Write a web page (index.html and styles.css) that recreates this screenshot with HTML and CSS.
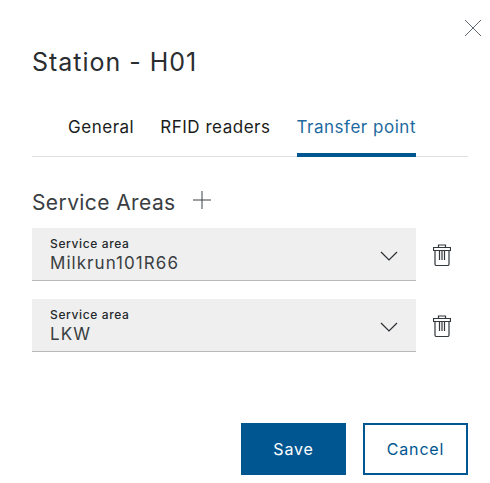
FILE: index.html
```html
<!DOCTYPE html>
<html lang="en">
<head>
<meta charset="utf-8">
<title>Station - H01</title>
<link rel="stylesheet" href="styles.css">
</head>
<body>
<div class="dialog">
  <div class="close-row">
    <svg class="close" width="18" height="18" viewBox="0 0 18 18"><path d="M1 1 L17 17 M17 1 L1 17" fill="none" stroke="#5f6670" stroke-width="1"/></svg>
  </div>
  <h1 class="title">Station - H01</h1>
  <div class="tabs">
    <span class="tab">General</span>
    <span class="tab">RFID readers</span>
    <span class="tab active">Transfer point</span>
  </div>
  <div class="section">
    <span class="section-title">Service Areas</span>
    <svg class="plus" width="20" height="20" viewBox="0 0 20 20"><path d="M10 1 V19 M1 10 H19" fill="none" stroke="#3c4248" stroke-width="1"/></svg>
  </div>
  <div class="rows">
    <div class="row">
      <div class="select">
        <div class="texts"><span class="label">Service area</span><span class="value">Milkrun101R66</span></div>
        <svg class="chev" width="18" height="10" viewBox="0 0 18 10"><path d="M1 1 L9 9 L17 1" fill="none" stroke="#2a2e32" stroke-width="1.2"/></svg>
      </div>
      <svg class="trash" width="18" height="22" viewBox="0 0 18 22"><path d="M0.5 3.5 H17.5 V6.5 H0.5 Z M5.5 3.5 V1 H12.5 V3.5 M2 6.5 V20 Q2 21.5 3.5 21.5 H14.5 Q16 21.5 16 20 V6.5 M6.5 6.5 V16 M9 6.5 V16 M11.5 6.5 V16" fill="none" stroke="#33383d" stroke-width="1.2"/></svg>
    </div>
    <div class="row">
      <div class="select">
        <div class="texts"><span class="label">Service area</span><span class="value">LKW</span></div>
        <svg class="chev" width="18" height="10" viewBox="0 0 18 10"><path d="M1 1 L9 9 L17 1" fill="none" stroke="#2a2e32" stroke-width="1.2"/></svg>
      </div>
      <svg class="trash" width="18" height="22" viewBox="0 0 18 22"><path d="M0.5 3.5 H17.5 V6.5 H0.5 Z M5.5 3.5 V1 H12.5 V3.5 M2 6.5 V20 Q2 21.5 3.5 21.5 H14.5 Q16 21.5 16 20 V6.5 M6.5 6.5 V16 M9 6.5 V16 M11.5 6.5 V16" fill="none" stroke="#33383d" stroke-width="1.2"/></svg>
    </div>
  </div>
  <div class="actions">
    <button class="btn primary">Save</button>
    <button class="btn secondary">Cancel</button>
  </div>
</div>
</body>
</html>
```
FILE: styles.css
```css
* { box-sizing: border-box; }
html, body { margin: 0; padding: 0; background: #fff; }
body { font-family: "Inter", "Noto Sans", sans-serif; color: #1f2327; }
.dialog { width: 490px; height: 483px; padding: 19px 22px 0 32px; display: flex; flex-direction: column; overflow: hidden; }
.close-row { display: flex; justify-content: flex-end; margin-right: -14px; height: 18px; }
.close { display: block; }
.title { margin: 8px 0 0; font-size: 25px; line-height: 34px; font-weight: 400; letter-spacing: 0.97px; color: #2a2d30; }
.tabs { display: flex; gap: 26px; padding-left: 36px; margin-top: 35px; height: 43px; border-bottom: 1px solid #dfdfe0; }
.tab { font-size: 17px; line-height: 24px; padding-top: 1px; letter-spacing: 0.52px; color: #1a1d20; height: 43px; }
.tab.active { color: #1d6aa0; border-bottom: 4px solid #005691; }
.section { display: flex; align-items: center; gap: 16px; margin-top: 31px; height: 28px; }
.section-title { font-size: 21px; line-height: 28px; letter-spacing: 0.4px; color: #3a3e42; margin-top: 2px; }
.plus { display: block; margin-top: -5px; }
.rows { display: flex; flex-direction: column; gap: 18px; margin-top: 12px; }
.row { display: flex; align-items: center; gap: 17px; }
.select { width: 384px; height: 53px; background: #efefef; border-bottom: 1px solid #b9b9bb; padding: 8px 18px; display: flex; align-items: center; justify-content: space-between; }
.texts { display: flex; flex-direction: column; margin-top: 2px; }
.label { font-size: 12px; line-height: 16px; font-weight: 500; letter-spacing: 0.63px; color: #25292d; }
.value { font-size: 17px; line-height: 21px; letter-spacing: 1.05px; color: #3a3e42; margin-top: 1px; }
.chev { display: block; margin-top: 3px; }
.trash { display: block; flex: none; }
.actions { display: flex; justify-content: flex-end; gap: 17px; margin-top: 71px; }
.btn { width: 105px; height: 52px; font-family: inherit; font-size: 16px; letter-spacing: 0.85px; border-radius: 0; padding: 0; }
.primary { background: #005691; border: 0; color: #fff; }
.secondary { background: #fff; border: 2px solid #005691; color: #005691; }
```
